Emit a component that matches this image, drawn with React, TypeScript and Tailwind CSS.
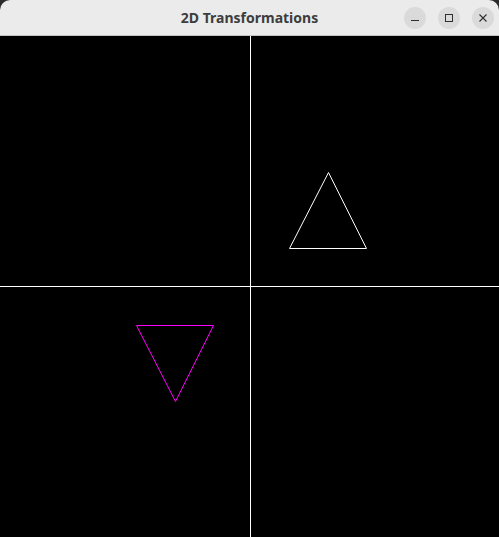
const font = { fontFamily: '"Noto Sans", "DejaVu Sans", sans-serif' };

function TitleButton({ children }: { children: React.ReactNode }) {
  return (
    <div className="flex h-[22px] w-[22px] items-center justify-center rounded-full bg-[#dadada] text-[#2e2e2e]">
      {children}
    </div>
  );
}

function Canvas() {
  return (
    <svg width="499" height="501" viewBox="0 0 499 501" className="block bg-black">
      {/* axes */}
      <line x1="250.5" y1="0" x2="250.5" y2="501" stroke="#ffffff" strokeWidth="1" />
      <line x1="0" y1="250.5" x2="499" y2="250.5" stroke="#ffffff" strokeWidth="1" />
      {/* original triangle */}
      <polygon
        points="328.5,136.5 289.5,212.5 366.5,212.5"
        fill="none"
        stroke="#ffffff"
        strokeWidth="1"
      />
      {/* transformed triangle */}
      <polygon
        points="136.5,289.5 213.5,289.5 175.5,365.5"
        fill="none"
        stroke="#ff00ff"
        strokeWidth="1"
      />
    </svg>
  );
}

export default function App() {
  return (
    <div className="h-[537px] w-[499px] overflow-hidden bg-[#2b2b2b]">
      <div className="flex h-full flex-col overflow-hidden rounded-t-[10px] bg-black">
        <div className="relative flex h-[36px] shrink-0 items-center justify-center border-b border-[#c4c4c4] bg-[#ebebeb]">
          <span className="text-[14px] font-bold text-[#3d3d3d]" style={font}>
            2D Transformations
          </span>
          <div className="absolute right-[5px] top-[7px] flex gap-[12px]">
            <TitleButton>
              <svg width="10" height="10" viewBox="0 0 10 10">
                <line x1="1" y1="7.5" x2="9" y2="7.5" stroke="currentColor" strokeWidth="1" />
              </svg>
            </TitleButton>
            <TitleButton>
              <svg width="10" height="10" viewBox="0 0 10 10">
                <rect x="1.5" y="1.5" width="7" height="7" fill="none" stroke="currentColor" strokeWidth="1" />
              </svg>
            </TitleButton>
            <TitleButton>
              <svg width="10" height="10" viewBox="0 0 10 10">
                <path d="M1.5 1.5 L8.5 8.5 M8.5 1.5 L1.5 8.5" stroke="currentColor" strokeWidth="1.1" />
              </svg>
            </TitleButton>
          </div>
        </div>
        <Canvas />
      </div>
    </div>
  );
}
